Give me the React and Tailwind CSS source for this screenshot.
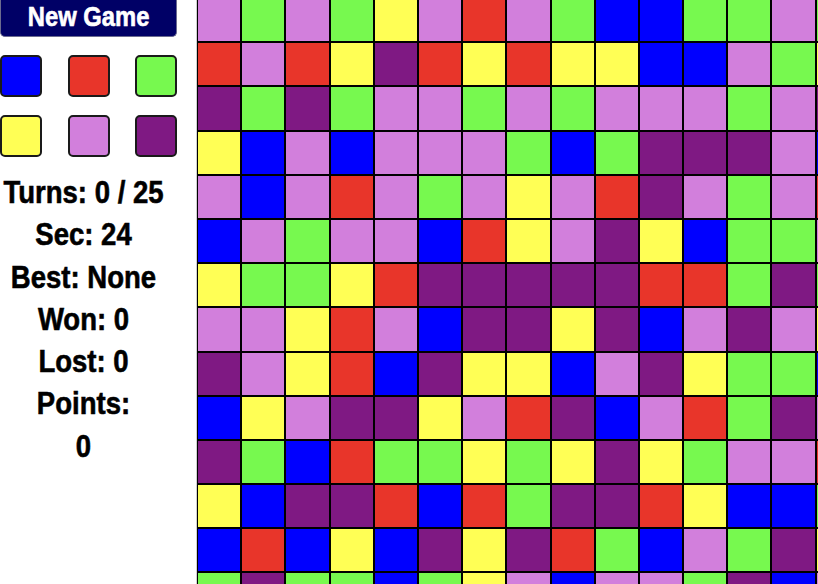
import React from "react";

// board colours, one letter per cell
const COLORS = {
    B: "bg-[#0000ff]",
    R: "bg-[#e8352a]",
    G: "bg-[#77f94f]",
    Y: "bg-[#ffff55]",
    P: "bg-[#d27fdc]",
    U: "bg-[#7f1983]",
};

const BOARD = [
    "PGPGYPRPGBBGGPG",
    "RPRYURYRYYBBPGY",
    "UGUGPPGPGPPPGPU",
    "YBPBPPPGBGUUUPB",
    "PBPRPGPYPRUPGPR",
    "BPGPPBRYPUYBGGP",
    "YGGYRUUUUURRGUG",
    "PPYRPBUUYUBPUPY",
    "UPYRBUYYBPUYGGB",
    "BYPUUYPRUBPRGUP",
    "UGBRGGYGYUYGPPR",
    "YBUURBRGUURYBBG",
    "BRBYBUYURGBPGUY",
    "GUGGBGYPBPPGUBP",
];

const SWATCHES = ["B", "R", "G", "Y", "P", "U"];

const STATS = ["Turns: 0 / 25", "Sec: 24", "Best: None", "Won: 0", "Lost: 0", "Points:", "0"];

// no Impact here, so squeeze Liberation Sans bold
const heavy = "font-['Liberation_Sans',Arial,sans-serif] font-bold [-webkit-text-stroke:0.6px_currentColor]";

function App() {
    return (
        <div className="w-[818px] h-[584px] overflow-hidden flex bg-white">
            {/* left side: button, colour picker, stats */}
            <div className="w-[196px] shrink-0">
                <button className={`w-[177px] h-[37px] pb-0.5 flex items-center justify-center bg-[#000066] border border-[#6b6b8f] border-t-0 rounded-b-[5px] text-white text-[28px] leading-none ${heavy}`}>
                    <span className="inline-block whitespace-nowrap scale-x-[0.85]">New Game</span>
                </button>
                <div className="w-[177px] mt-[18px] grid grid-cols-3 gap-y-[18px]">
                    {SWATCHES.map((c, i) => (
                        <div
                            key={i}
                            className={`w-[42px] h-[42px] rounded-[5px] border-2 border-[#1a1a1a] ${COLORS[c]} ${i % 3 === 1 ? "justify-self-center" : i % 3 === 2 ? "justify-self-end" : ""}`}
                        />
                    ))}
                </div>
                <div className={`w-[167px] mt-[14px] text-black text-[32px] leading-[42.3px] scale-x-[0.86] ${heavy}`}>
                    {STATS.map((s, i) => (
                        <div key={i} className="flex justify-center whitespace-nowrap">{s}</div>
                    ))}
                </div>
            </div>

            {/* board */}
            <div className="flex-1 border-l border-[#cfcfcf] overflow-hidden">
                <div className="-mt-0.5 grid grid-cols-[repeat(15,44.2px)] auto-rows-[44.2px]">
                    {BOARD.map((row, r) =>
                        row.split("").map((c, i) => (
                            <div key={r + "-" + i} className={`border border-black ${COLORS[c]}`} />
                        ))
                    )}
                </div>
            </div>
        </div>
    );
}

export default App;
